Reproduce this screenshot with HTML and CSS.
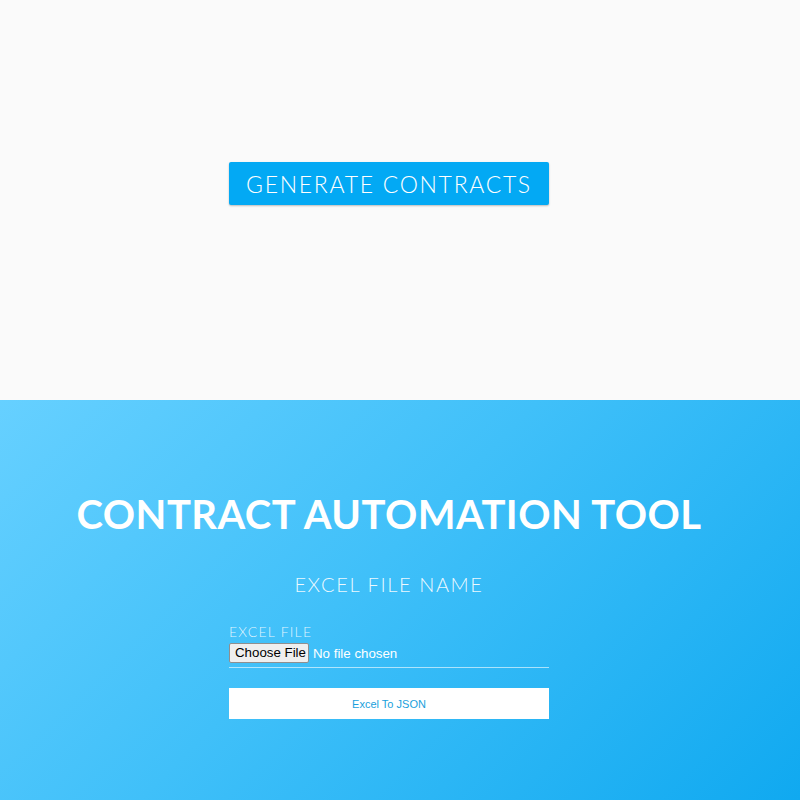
FILE: index.html
```html
<!DOCTYPE html>
<html>
<head>
<meta charset="utf-8">
<link rel="stylesheet" href="styles.css">
</head>
<body>
<section class="top">
  <button class="gen-btn">GENERATE CONTRACTS</button>
</section>
<section class="bottom">
  <h1 class="title">CONTRACT AUTOMATION TOOL</h1>
  <h2 class="subtitle">EXCEL FILE NAME</h2>
  <form class="form">
    <label class="label">EXCEL FILE</label>
    <div class="file-row">
      <span class="choose">Choose File</span>
      <span class="nofile">No file chosen</span>
    </div>
    <button type="button" class="json-btn">Excel To JSON</button>
  </form>
</section>
</body>
</html>
```

FILE: styles.css
```css
html, body {
  margin: 0;
  padding: 0;
}
body {
  width: 800px;
  font-family: "Lato", "Liberation Sans", sans-serif;
}
.top {
  height: 400px;
  background: #fafafa;
  box-sizing: border-box;
  padding-top: 162px;
  padding-right: 22px;
  display: flex;
  justify-content: center;
  align-items: flex-start;
}
.gen-btn {
  width: 320px;
  height: 43px;
  border: none;
  border-radius: 2px;
  background: #03a9f4;
  color: #fff;
  font-family: "Lato", sans-serif;
  font-weight: 300;
  font-size: 23px;
  letter-spacing: 1.7px;
  box-shadow: 0 1px 2px rgba(0,0,0,0.25);
  padding: 0;
}
.bottom {
  height: 400px;
  box-sizing: border-box;
  background: linear-gradient(135deg, #66d0ff 0%, #40c0f9 45%, #10a9f0 100%);
  padding-top: 90px;
  padding-right: 22px;
  display: flex;
  flex-direction: column;
  align-items: center;
}
.title {
  margin: 0;
  color: #fff;
  font-family: "Lato", sans-serif;
  font-weight: 700;
  font-size: 40px;
  line-height: 48px;
  letter-spacing: 0.45px;
}
.subtitle {
  margin: 34px 0 0;
  color: rgba(255,255,255,0.92);
  font-weight: 300;
  font-size: 20px;
  line-height: 24px;
  letter-spacing: 1.6px;
}
.form {
  width: 320px;
  margin-top: 28px;
  display: flex;
  flex-direction: column;
}
.label {
  color: rgba(255,255,255,0.85);
  font-weight: 300;
  font-size: 14px;
  letter-spacing: 1.2px;
  line-height: 16px;
}
.file-row {
  display: flex;
  align-items: center;
  gap: 4px;
  padding: 3px 0 4px;
  border-bottom: 1px solid rgba(255,255,255,0.6);
  font-family: "Liberation Sans", Arial, sans-serif;
  font-size: 13.3px;
}
.choose {
  background: #efefef;
  border: 1px solid #8f8f8f;
  border-radius: 2px;
  color: #000;
  padding: 1px 5px;
  line-height: 16px;
  width: 68px;
  text-align: center;
  white-space: nowrap;
}
.nofile {
  color: #fff;
}
.json-btn {
  margin-top: 20px;
  height: 31px;
  border: none;
  background: #fff;
  color: #1a9fdc;
  font-family: "Liberation Sans", Arial, sans-serif;
  font-size: 11px;
  padding: 0;
}
```
